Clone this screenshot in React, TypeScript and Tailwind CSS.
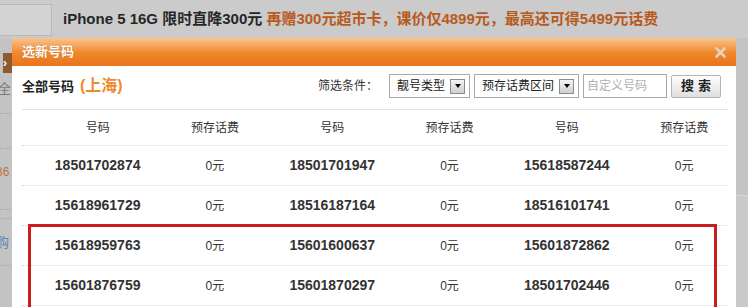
import React from "react";

const rows: [string, string, string][] = [
  ["18501702874", "18501701947", "15618587244"],
  ["15618961729", "18516187164", "18516101741"],
  ["15618959763", "15601600637", "15601872862"],
  ["15601876759", "15601870297", "18501702446"],
];

const Select = ({ label, width }: { label: string; width: string }) => (
  <div
    className={`flex items-center justify-between h-[24px] ${width} border border-[#a9a9a9] bg-white pl-[7px] pr-[4px] text-[12px] text-[#222]`}
  >
    <span>{label}</span>
    <span className="flex items-center justify-center w-[15px] h-[15px] border border-[#8a8a8a] bg-gradient-to-b from-[#f4f4f4] to-[#cfcfcf]">
      <span className="w-0 h-0 border-l-[3.5px] border-r-[3.5px] border-t-[4px] border-l-transparent border-r-transparent border-t-black" />
    </span>
  </div>
);

const App = () => {
  return (
    <div
      className="relative w-[748px] h-[307px] overflow-hidden bg-[#c7c7c7]"
      style={{ fontFamily: '"Liberation Sans", "Noto Sans CJK SC", sans-serif' }}
    >
      {/* page behind the overlay */}
      <div className="flex items-center h-[38px] bg-[#cbcbcb]">
        <div className="w-[52px] h-[32px] mt-[1px] bg-[#d3d3d3] border border-l-0 border-[#b9b9b9]" />
        <div className="ml-[11px] text-[15px] font-bold text-[#262626] whitespace-nowrap">
          iPhone 5 16G 限时直降300元{" "}
          <span className="text-[#b85a1e]">
            再赠300元超市卡，课价仅4899元，最高还可得5499元话费
          </span>
        </div>
      </div>

      <div className="flex">
        {/* left strip of page */}
        <div className="w-[12px] h-[269px] overflow-hidden bg-[#c3c3c3] text-[13px]">
          <div className="mt-[15px] ml-[3px] w-[9px] h-[20px] bg-[#8d5a2e] text-white text-[12px] leading-[20px] font-bold">
            ›
          </div>
          <div className="mt-[8px] text-[#7a7a7a] leading-[16px] -ml-[2px]">全</div>
          <div className="mt-[16px] border-t border-dotted border-[#a8a8a8]" />
          <div className="mt-[34px] border-t border-dotted border-[#a8a8a8]" />
          <div className="mt-[14px] text-[#c0703a] text-[12px] -ml-[4px]">36</div>
          <div className="mt-[28px] border-t border-dotted border-[#a8a8a8]" />
          <div className="mt-[8px] border-t border-[#b5b5b5]" />
          <div className="mt-[14px] text-[#5f86b3] -ml-[4px]">购</div>
          <div className="mt-[12px] border-t border-[#b5b5b5]" />
        </div>

        {/* dialog */}
        <div className="w-[724px] h-[269px] bg-white">
          <div className="flex items-center justify-between h-[28px] pl-[10px] pr-[10px] bg-gradient-to-b from-[#f9c38e] via-[#f08b2c] to-[#e8731a]">
            <span className="text-[13px] font-bold text-white [text-shadow:0_0_1px_#b55a10]">
              选新号码
            </span>
            <svg width="11" height="11" viewBox="0 0 11 11">
              <path d="M1.5 1.5 L9.5 9.5 M9.5 1.5 L1.5 9.5" stroke="#e6d2c4" strokeWidth="2.6" strokeLinecap="round" />
            </svg>
          </div>

          <div className="pl-[10px] pr-[8px]">
            <div className="flex items-center justify-between pt-[8px] pb-[11px] pr-[7px]">
              <div className="flex items-baseline">
                <span className="text-[13px] font-bold text-[#222]">全部号码</span>
                <span className="ml-[6px] text-[16px] font-bold text-[#ee8a30]">(上海)</span>
              </div>
              <div className="flex items-center gap-[4px]">
                <span className="text-[12px] text-[#333] mr-[7px]">筛选条件：</span>
                <Select label="靓号类型" width="w-[81px]" />
                <Select label="预存话费区间" width="w-[105px]" />
                <div className="flex items-center h-[24px] w-[84px] border border-[#a9a9a9] pl-[3px] text-[12px] text-[#b0b0b0]">
                  自定义号码
                </div>
                <button className="h-[23px] w-[50px] rounded-[2px] border border-[#b5b5b5] bg-gradient-to-b from-white to-[#dedede] text-[13px] font-bold text-[#222] tracking-[4px] pl-[4px]">
                  搜索
                </button>
              </div>
            </div>

            <div className="border-t border-[#e3e3e3]">
              <div className="grid grid-cols-[repeat(6,117.3px)] pl-[17px] h-[36px] items-center text-center text-[12px] text-[#333] border-b border-dotted border-[#d6d6d6]">
                <span>号码</span>
                <span>预存话费</span>
                <span>号码</span>
                <span>预存话费</span>
                <span>号码</span>
                <span>预存话费</span>
              </div>
              {rows.map((r, i) => (
                <div
                  key={i}
                  className="grid grid-cols-[repeat(6,117.3px)] pl-[17px] h-[40px] items-center text-center text-[#333] border-b border-dotted border-[#d6d6d6]"
                >
                  {r.map((n) => (
                    <React.Fragment key={n}>
                      <span className="text-[14px] font-bold">{n}</span>
                      <span className="text-[12px]">0元</span>
                    </React.Fragment>
                  ))}
                </div>
              ))}
            </div>
          </div>
        </div>

        {/* right strip of page */}
        <div className="flex-1 h-[269px] flex flex-col bg-[#c4c4c4]">
          <div className="h-[157px]" />
          <div className="flex-1 border-t border-[#d8d8d8] bg-[#c9c9c9]" />
        </div>
      </div>

      {/* red annotation box */}
      <div className="absolute left-[28px] top-[224px] w-[689px] h-[100px] border-[3px] border-[#cc1c1c]" />
    </div>
  );
};

export default App;
